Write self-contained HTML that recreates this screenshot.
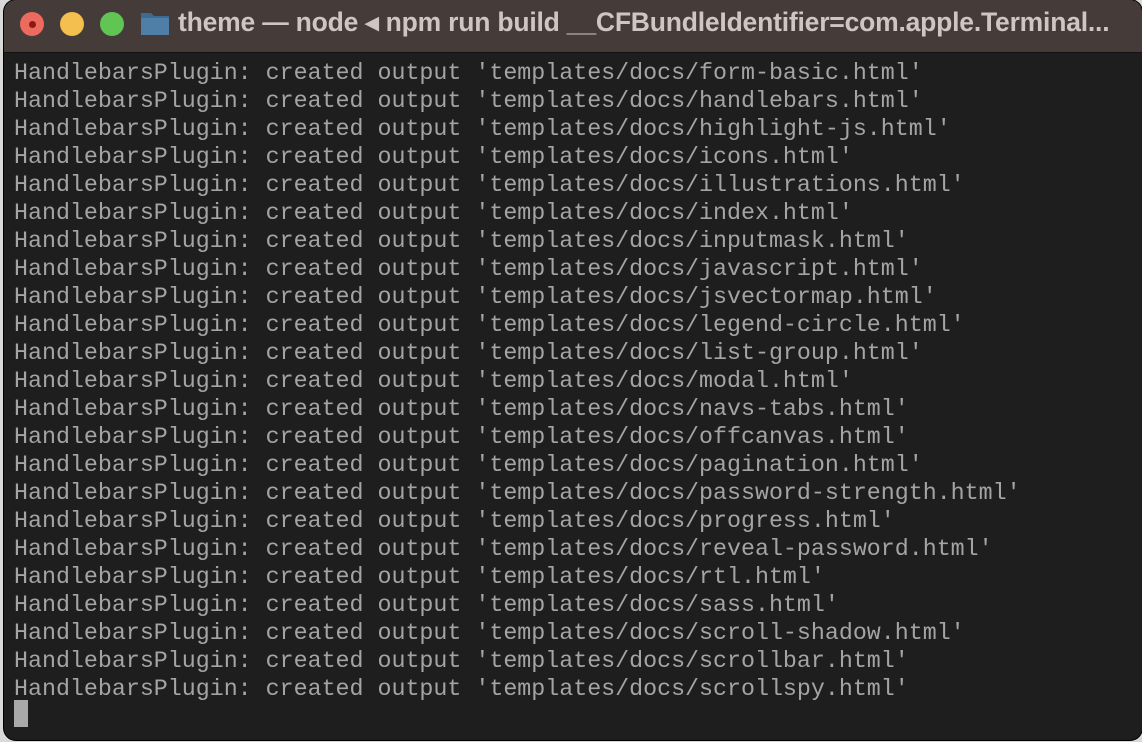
<!DOCTYPE html>
<html><head><style>
body{margin:0;width:1142px;height:742px;background:#d9d9d9;overflow:hidden}
.win{position:absolute;left:4px;top:0;width:1138px;height:740px;border-radius:12px;overflow:hidden;background:#1e1e1e;box-shadow:0 0 0 1px #000}
.tb{position:absolute;left:0;top:0;right:0;height:52px;background:#453c3a;border-bottom:1px solid #111}
.d{position:absolute;top:12px;width:24px;height:24px;border-radius:50%}
.t{position:absolute;left:174px;top:7px;color:#cfc6c3;font:bold 26.5px "Liberation Sans",sans-serif;white-space:nowrap;letter-spacing:-0.2px}
pre{position:absolute;left:10px;top:59px;margin:0;font:23.3px/28px "Liberation Mono",monospace;color:#a4a4a4}
.cur{position:absolute;left:10px;top:700px;width:14px;height:27px;background:#a9a9a9}
</style></head><body>
<div class="win">
<div class="tb">
<div class="d" style="left:16px;background:#ed6a5e"><div style="position:absolute;left:9px;top:9px;width:7px;height:7px;border-radius:50%;background:#8c1a10"></div></div>
<div class="d" style="left:56px;background:#f5bf4f"></div>
<div class="d" style="left:96px;background:#61c554"></div>
<svg style="position:absolute;left:136px;top:10px" width="30" height="26"><path d="M1 3h10l3 3h15v19H1z" fill="#3d6a8e"/><path d="M1 8h28v17H1z" fill="#4f7fa6"/></svg>
<div class="t">theme — node ◂ npm run build __CFBundleIdentifier=com.apple.Terminal...</div>
</div>
<pre>HandlebarsPlugin: created output 'templates/docs/form-basic.html'
HandlebarsPlugin: created output 'templates/docs/handlebars.html'
HandlebarsPlugin: created output 'templates/docs/highlight-js.html'
HandlebarsPlugin: created output 'templates/docs/icons.html'
HandlebarsPlugin: created output 'templates/docs/illustrations.html'
HandlebarsPlugin: created output 'templates/docs/index.html'
HandlebarsPlugin: created output 'templates/docs/inputmask.html'
HandlebarsPlugin: created output 'templates/docs/javascript.html'
HandlebarsPlugin: created output 'templates/docs/jsvectormap.html'
HandlebarsPlugin: created output 'templates/docs/legend-circle.html'
HandlebarsPlugin: created output 'templates/docs/list-group.html'
HandlebarsPlugin: created output 'templates/docs/modal.html'
HandlebarsPlugin: created output 'templates/docs/navs-tabs.html'
HandlebarsPlugin: created output 'templates/docs/offcanvas.html'
HandlebarsPlugin: created output 'templates/docs/pagination.html'
HandlebarsPlugin: created output 'templates/docs/password-strength.html'
HandlebarsPlugin: created output 'templates/docs/progress.html'
HandlebarsPlugin: created output 'templates/docs/reveal-password.html'
HandlebarsPlugin: created output 'templates/docs/rtl.html'
HandlebarsPlugin: created output 'templates/docs/sass.html'
HandlebarsPlugin: created output 'templates/docs/scroll-shadow.html'
HandlebarsPlugin: created output 'templates/docs/scrollbar.html'
HandlebarsPlugin: created output 'templates/docs/scrollspy.html'</pre>
<div class="cur"></div>
</div>
</body></html>
